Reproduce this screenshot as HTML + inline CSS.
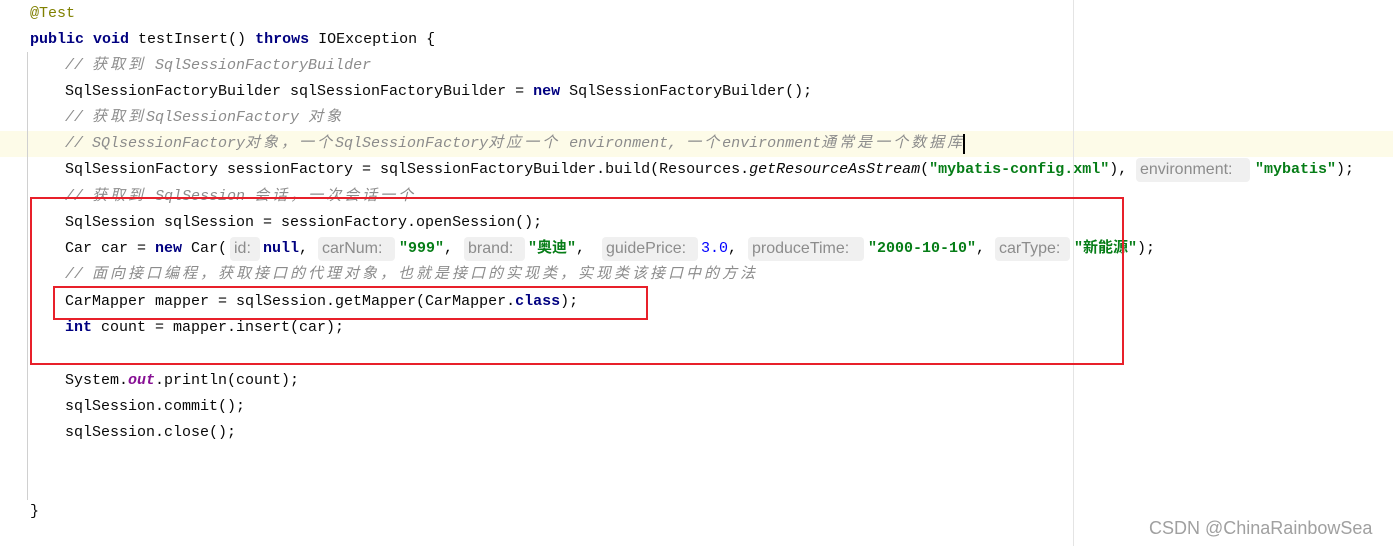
<!DOCTYPE html>
<html><head><meta charset="utf-8"><style>
body{margin:0;width:1393px;height:546px;background:#fff;position:relative;overflow:hidden;font-family:"Liberation Mono","Noto Sans CJK SC",monospace;font-size:15px;color:#080808}
.l{position:absolute;height:26px;line-height:26px;white-space:pre}
.k{color:#000080;font-weight:bold}
.s{color:#067d17;font-weight:bold}
.n{color:#0000ff}
.c{color:#8c8c8c;font-style:italic}
.z{letter-spacing:3px}
.a{color:#808000}
.o{color:#871094;font-weight:bold;font-style:italic}
.h{position:absolute;height:24px;line-height:24px;top:1px;background:#f0f0f0;border-radius:4px;color:#8c8c8c;font-family:"Liberation Sans",sans-serif;font-size:16px;padding:0 4px;box-sizing:border-box;white-space:pre}
.i{font-style:italic}
</style></head><body>
<div style="position:absolute;left:0;top:131px;width:1393px;height:26px;background:#fdfbe8"></div>
<div style="position:absolute;left:27px;top:52px;width:1px;height:448px;background:#d0d0d0"></div>
<div style="position:absolute;left:1073px;top:0;width:1px;height:546px;background:#e4e4e4"></div>

<div class="l a" style="left:30px;top:1px">@Test</div>
<div class="l" style="left:30px;top:27px"><span class="k">public void</span> testInsert() <span class="k">throws</span> IOException {</div>
<div class="l c" style="left:65px;top:53px">// <span class="z">获取到</span> SqlSessionFactoryBuilder</div>
<div class="l" style="left:65px;top:79px">SqlSessionFactoryBuilder sqlSessionFactoryBuilder = <span class="k">new</span> SqlSessionFactoryBuilder();</div>
<div class="l c" style="left:65px;top:105px">// <span class="z">获取到</span>SqlSessionFactory <span class="z">对象</span></div>
<div class="l c" style="left:65px;top:131px">// SQlsessionFactory<span class="z">对象，一个</span>SqlSessionFactory<span class="z">对应一个</span> environment, <span class="z">一个</span>environment<span class="z">通常是一个数据库</span></div>
<div style="position:absolute;left:963px;top:134px;width:2px;height:20px;background:#000"></div>
<div class="l" style="left:65px;top:157px">SqlSessionFactory sessionFactory = sqlSessionFactoryBuilder.build(Resources.<span class="i">getResourceAsStream</span>(<span class="s">"mybatis-config.xml"</span>),</div>
<div class="h" style="left:1136px;top:158px;width:114px">environment:</div>
<div class="l" style="left:1255px;top:157px"><span class="s">"mybatis"</span>);</div>
<div class="l c" style="left:65px;top:184px">// <span class="z">获取到</span> SqlSession <span class="z">会话，一次会话一个</span></div>
<div class="l" style="left:65px;top:210px">SqlSession sqlSession = sessionFactory.openSession();</div>
<div class="l" style="left:65px;top:236px">Car car = <span class="k">new</span> Car(</div>
<div class="h" style="left:230px;top:237px;width:30px">id:</div>
<div class="l" style="left:263px;top:236px"><span class="k">null</span>,</div>
<div class="h" style="left:318px;top:237px;width:77px">carNum:</div>
<div class="l" style="left:399px;top:236px"><span class="s">"999"</span>,</div>
<div class="h" style="left:464px;top:237px;width:61px">brand:</div>
<div class="l" style="left:528px;top:236px"><span class="s">"奥迪"</span>,</div>
<div class="h" style="left:602px;top:237px;width:96px">guidePrice:</div>
<div class="l" style="left:701px;top:236px"><span class="n">3.0</span>,</div>
<div class="h" style="left:748px;top:237px;width:116px">produceTime:</div>
<div class="l" style="left:868px;top:236px"><span class="s">"2000-10-10"</span>,</div>
<div class="h" style="left:995px;top:237px;width:75px">carType:</div>
<div class="l" style="left:1074px;top:236px"><span class="s">"新能源"</span>);</div>
<div class="l c" style="left:65px;top:262px">// <span class="z">面向接口编程，获取接口的代理对象，也就是接口的实现类，实现类该接口中的方法</span></div>
<div class="l" style="left:65px;top:289px">CarMapper mapper = sqlSession.getMapper(CarMapper.<span class="k">class</span>);</div>
<div class="l" style="left:65px;top:315px"><span class="k">int</span> count = mapper.insert(car);</div>
<div class="l" style="left:65px;top:368px">System.<span class="o">out</span>.println(count);</div>
<div class="l" style="left:65px;top:394px">sqlSession.commit();</div>
<div class="l" style="left:65px;top:420px">sqlSession.close();</div>
<div class="l" style="left:30px;top:499px">}</div>

<div style="position:absolute;left:30px;top:197px;width:1090px;height:164px;border:2px solid #e8202a"></div>
<div style="position:absolute;left:53px;top:286px;width:591px;height:30px;border:2px solid #e8202a"></div>

<div style="position:absolute;left:1149px;top:518px;font-family:'Liberation Sans',sans-serif;font-size:18px;color:#a0a0a0">CSDN @ChinaRainbowSea</div>
</body></html>
